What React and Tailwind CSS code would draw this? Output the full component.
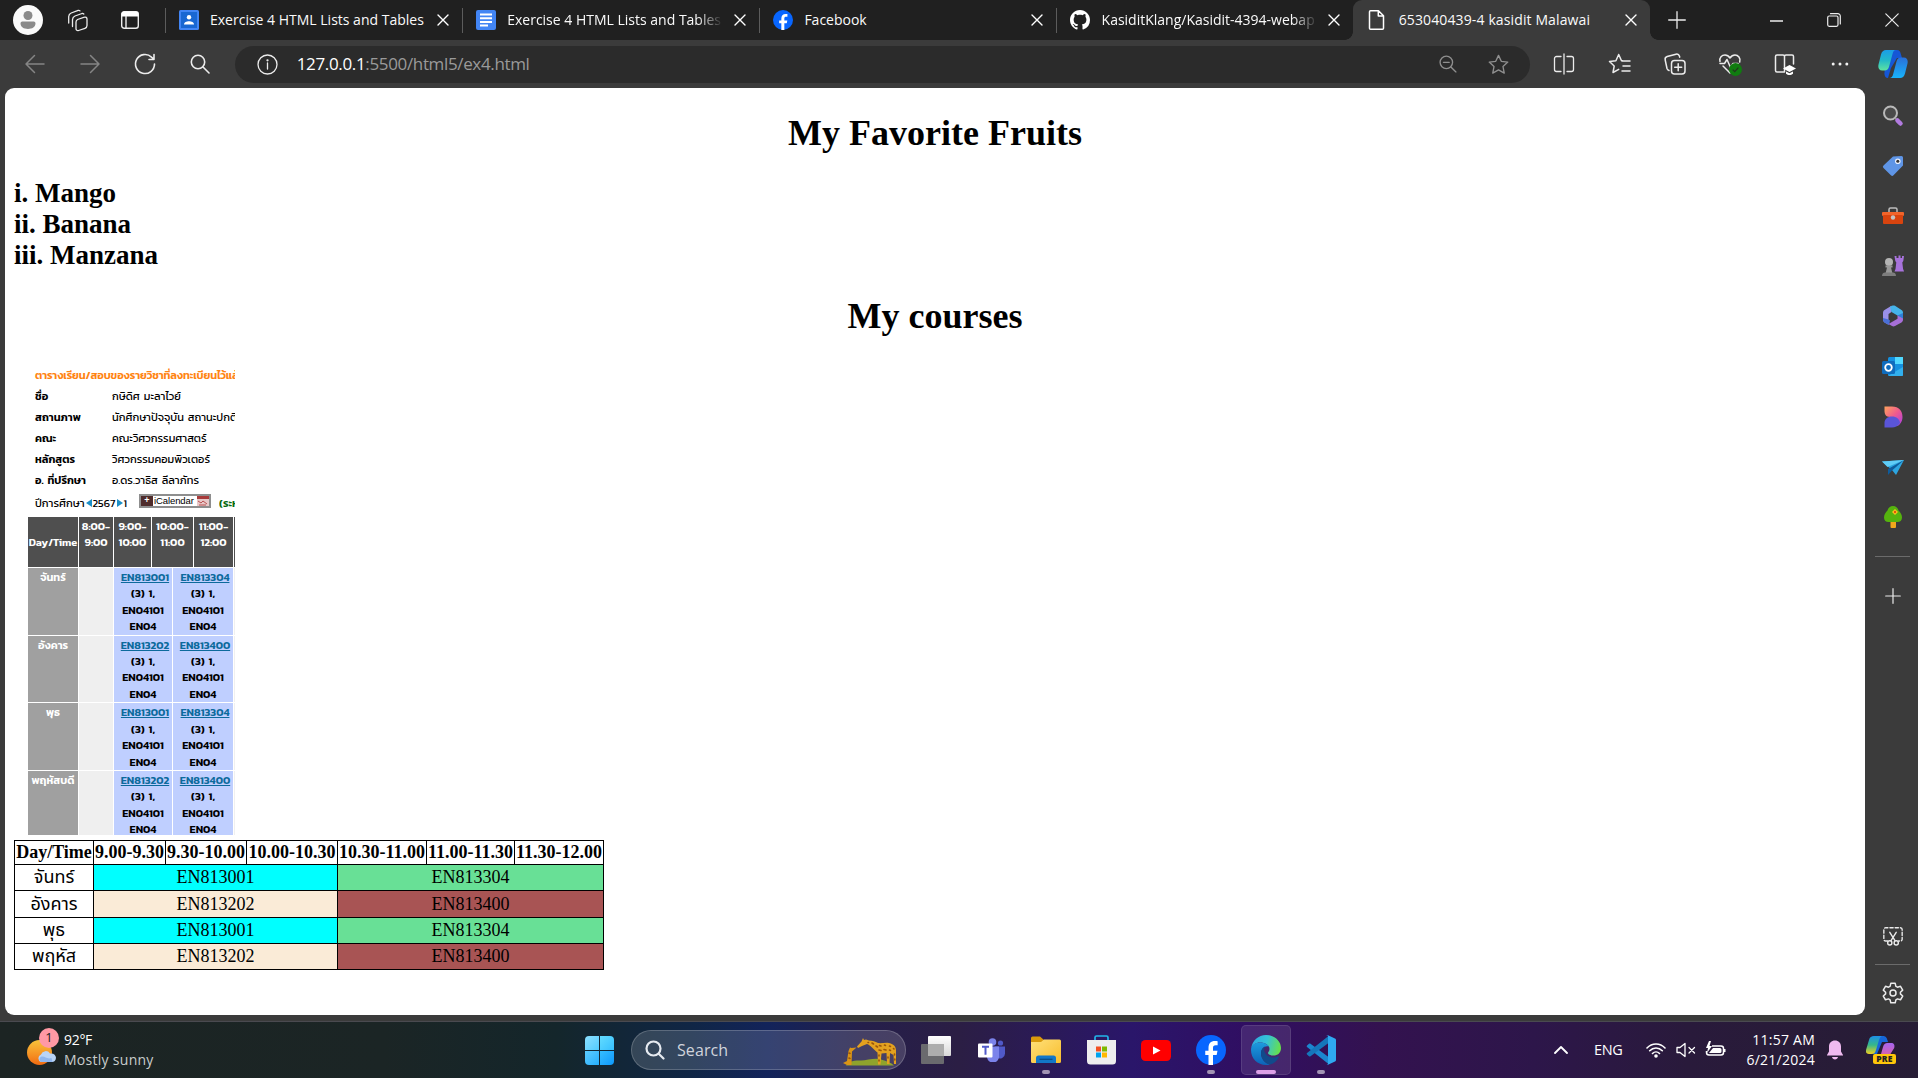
import React from "react";

const ui = "font-['Segoe_UI','Open_Sans',sans-serif]";

function Line({ size = 24, w = 1.3, color = "#ececec", children, box = "0 0 24 24" }) {
  return (
    <svg width={size} height={size} viewBox={box} fill="none" stroke={color} strokeWidth={w} strokeLinecap="round" strokeLinejoin="round" className="shrink-0">
      {children}
    </svg>
  );
}

/* ---------- favicons ---------- */

const Classroom = () => (
  <svg width="20" height="20" viewBox="0 0 20 20">
    <rect width="20" height="20" rx="1.5" fill="#4285f4" />
    <rect x="2" y="2" width="16" height="16" fill="#1967d2" />
    <circle cx="10" cy="7.3" r="2.2" fill="#fff" />
    <path d="M5 14.5c0-2.3 2.5-3.3 5-3.3s5 1 5 3.3z" fill="#fff" />
  </svg>
);

const Docs = () => (
  <svg width="20" height="20" viewBox="0 0 20 20">
    <rect width="20" height="20" rx="2" fill="#4285f4" />
    <path d="M4 3.5h12v2H4zM4 7.3h12v2H4zM4 11h12v2H4zM4 14.6h8v2H4z" fill="#fff" />
  </svg>
);

const Facebook = ({ size = 20 }) => (
  <svg width={size} height={size} viewBox="0 0 24 24">
    <circle cx="12" cy="12" r="12" fill="#0866ff" />
    <path d="M10 24v-8H7.4v-3.5H10v-2C10 6.600 11.700 4.700 15.300 4.700c.7 0 1.500.1 2 .2v3.200h-1.500c-1.700 0-2.200.8-2.200 2.200v2.200h3.600l-.7 3.500h-2.900V24z" fill="#fff" />
  </svg>
);

const Github = () => (
  <svg width="20" height="20" viewBox="0 0 16 16" fill="#fff">
    <path d="M8 0C3.580 0 0 3.580 0 8c0 3.540 2.290 6.530 5.470 7.590.4.07.55-.17.55-.38 0-.19-.01-.82-.01-1.490-2.010.37-2.530-.49-2.690-.94-.09-.23-.48-.94-.82-1.130-.28-.15-.68-.52-.01-.53.63-.01 1.080.58 1.230.82.72 1.210 1.870.87 2.330.66.07-.52.28-.87.51-1.070-1.780-.2-3.640-.89-3.640-3.950 0-.87.31-1.590.82-2.150-.08-.2-.36-1.020.08-2.120 0 0 .67-.21 2.200.82.64-.18 1.320-.27 2-.27s1.360.09 2 .27c1.530-1.040 2.200-.82 2.200-.82.44 1.100.16 1.920.08 2.120.51.56.82 1.270.82 2.150 0 3.070-1.870 3.750-3.650 3.950.29.25.54.73.54 1.480 0 1.070-.01 1.930-.01 2.200 0 .21.15.46.55.38A8 8 0 0 0 16 8c0-4.420-3.580-8-8-8z" />
  </svg>
);

const PageIcon = () => (
  <Line size={20} box="0 0 20 20" w={1.5} color="#fff">
    <path d="M3.500 .8h8l5 5v12.400a1 1 0 0 1-1 1h-12a1 1 0 0 1-1-1v-16.400a1 1 0 0 1 1-1zM11.300 1v5h5" />
  </Line>
);

const Close = () => (
  <Line size={12} box="0 0 12 12" w={1.4} color="#fff">
    <path d="M1 1l10 10M11 1L1 11" />
  </Line>
);

function Tab({ icon, title, active, fade, tracking }) {
  return (
    <div className={"relative flex h-10 w-[297.200px] shrink-0 items-center pl-[14px] " + (active ? "rounded-t-[9px] bg-[#3b3b3b]" : "")}>
      {!active && <span className="absolute left-0 top-2 h-[25px] w-px bg-[#5c5c5c]" />}
      <span className="w-5 shrink-0">{icon}</span>
      <span className={"ml-[11.500px] w-[216px] overflow-hidden whitespace-nowrap text-[14px] leading-5 text-[#fafafa] " + tracking + (fade ? " [mask-image:linear-gradient(to_right,#000_88%,transparent)]" : "")}>{title}</span>
      <span className="ml-[10.500px]"><Close /></span>
      {active && <span className="absolute -left-2 bottom-0 size-2 bg-[radial-gradient(circle_at_0_0,#202020_7.500px,#3b3b3b_8px)]" />}
      {active && <span className="absolute -right-2 bottom-0 size-2 bg-[radial-gradient(circle_at_100%_0,#202020_7.500px,#3b3b3b_8px)]" />}
    </div>
  );
}

function TabStrip() {
  return (
    <div className="flex h-10 bg-[#202020]">
      <div className="flex w-[164.500px] shrink-0 items-center pl-[13px]">
        <span className="flex size-[30px] items-center justify-center rounded-full bg-[#fafafa]">
          <svg width="18" height="20" viewBox="0 0 18 20" fill="#8a8a8a">
            <circle cx="9" cy="5.500" r="4.500" />
            <path d="M1.500 13.300a1.800 1.800 0 0 1 1.800-1.800h11.400a1.800 1.800 0 0 1 1.800 1.800c0 3.800-3.300 5.700-7.500 5.700s-7.500-1.900-7.500-5.700z" />
          </svg>
        </span>
        <span className="ml-[23px]">
          <Line size={24} w={1.3}>
            <path d="M11.500 11.500l7-2.300a1.800 1.800 0 0 1 2.500 1.700v6.600a3 3 0 0 1-2 2.800l-6.500 2.200a1.800 1.800 0 0 1-2.500-1.700v-6.500a3 3 0 0 1 1.500-2.800z" />
            <path d="M6.500 18.500v-7a4 4 0 0 1 2.500-3.500l7-2.500a2 2 0 0 1 1.800.5M2.700 15V8.500A4 4 0 0 1 5.200 5l7-2.600a2 2 0 0 1 1.800.5" />
          </Line>
        </span>
        <span className="ml-[28px]">
          <svg width="24" height="24" viewBox="0 0 24 24" fill="none">
            <rect x="3.700" y="3.700" width="16.600" height="16.600" rx="2.500" stroke="#ececec" strokeWidth="1.400" />
            <path d="M3.500 8.500V6A2.500 2.500 0 0 1 6 3.500h12A2.500 2.500 0 0 1 20.500 6v2.500z" fill="#fff" />
            <path d="M8 8v12" stroke="#ececec" strokeWidth="1.400" />
          </svg>
        </span>
      </div>
      <Tab icon={<Classroom />} title="Exercise 4 HTML Lists and Tables" tracking="tracking-[0px]" />
      <Tab icon={<Docs />} title="Exercise 4 HTML Lists and Tables" fade tracking="tracking-[0px]" />
      <Tab icon={<Facebook />} title="Facebook" tracking="tracking-[0px]" />
      <Tab icon={<Github />} title="KasiditKlang/Kasidit-4394-webap" fade tracking="tracking-[0px]" />
      <Tab icon={<PageIcon />} title="653040439-4 kasidit Malawai" active tracking="tracking-[0.120px]" />
      <div className="flex flex-1 items-center justify-between pl-[18px] pr-[19px]">
        <Line size={18} box="0 0 18 18"><path d="M9 .7v16.600M.7 9h16.600" /></Line>
        <div className="flex items-center gap-[44px]">
          <Line size={13} box="0 0 13 13"><path d="M0 7h13" /></Line>
          <Line size={14} box="0 0 14 14" w={1.200}><rect x=".7" y="3" width="10.300" height="10.300" rx="1.500" /><path d="M3.500 .7h7.300a2.500 2.500 0 0 1 2.500 2.500V11" /></Line>
          <Line size={14} box="0 0 14 14" w={1.200}><path d="M.8 .8l12.400 12.400M13.200 .8L.8 13.200" /></Line>
        </div>
      </div>
    </div>
  );
}

const Copilot = () => (
  <svg width="30" height="28" viewBox="0 0 30 28">
    <defs>
      <linearGradient id="cpA" x1="0" y1="0" x2="0" y2="1"><stop offset="0" stopColor="#1b9de8" /><stop offset=".5" stopColor="#22b8c9" /><stop offset="1" stopColor="#5fe3a0" /></linearGradient>
      <linearGradient id="cpB" x1="0" y1="0" x2="0" y2="1"><stop offset="0" stopColor="#2a6fd8" /><stop offset="1" stopColor="#18b4fb" /></linearGradient>
    </defs>
    <path d="M8 0h11c2.500 0 3 1.500 3.700 3.500L24 8h-5l-6 10-3 10c-2.500 0-3-1.500-3.600-4z" fill="#1557d6" />
    <path d="M8 0h10c-2 0-2.800 1.200-3.500 4l-3.400 12.500c-.7 2.500-2 4-4.500 4H4.200C1 20.500-.2 18 .5 14.500L3 4.500C3.800 1.500 5.500 0 8 0z" fill="url(#cpA)" />
    <path d="M22 28H11.500c2 0 3-1.200 3.700-4l3.300-12.500c.7-2.500 2-4 4.500-4h2.800c3.200 0 4.400 2.500 3.700 6L27 23.500c-.8 3-2.500 4.500-5 4.500z" fill="url(#cpB)" />
  </svg>
);

function Toolbar() {
  const cell = "flex w-[55.200px] shrink-0 justify-center";
  return (
    <div className="flex h-12 items-center bg-[#3b3b3b] pl-[7px]">
      <span className={cell}><Line color="#858585" w={1.500}><path d="M21 12H3.500M11.500 3.500L3 12l8.500 8.500" /></Line></span>
      <span className={cell}><Line color="#858585" w={1.500}><path d="M3 12h17.500M12.500 3.500L21 12l-8.500 8.500" /></Line></span>
      <span className={cell}><Line w={1.600}><path d="M21.500 12a9.500 9.500 0 1 1-3-6.900L21 7.300M21 2.500v5h-5" /></Line></span>
      <span className={cell}><Line w={1.600}><circle cx="10" cy="10" r="6.700" /><path d="M15 15l6 6" /></Line></span>
      <div className="ml-[7px] flex h-[37px] w-[1295px] shrink-0 items-center rounded-full bg-[#2b2b2b] pl-[22px] pr-[20px]">
        <Line size={21} box="0 0 21 21" w={1.300}><circle cx="10.500" cy="10.500" r="9.500" /><path d="M10.500 9v6" /><circle cx="10.500" cy="6.300" r=".5" fill="#ececec" /></Line>
        <span className="ml-[19px] text-[17px] leading-6 tracking-[-0.350px] text-[#9a9a9a]"><span className="text-white">127.0.0.1</span>:5500/html5/ex4.html</span>
        <span className="flex-1" />
        <Line color="#8f8f8f" size={20} w={1.600}><circle cx="10" cy="10" r="7.500" /><path d="M15.500 15.500l6 6M6.500 10h7" /></Line>
        <span className="ml-[29px] flex"><Line color="#8f8f8f" size={23} w={1.400}><path d="M12 2.500l2.900 6.200 6.800.8-5 4.700 1.300 6.800-6-3.400L6 21l1.300-6.800-5-4.700 6.800-.8z" /></Line></span>
      </div>
      <span className={cell + " ml-[7px]"}><Line><path d="M12 2v20M9 4.500H4.500a2 2 0 0 0-2 2v11a2 2 0 0 0 2 2H9M15 4.500h4.500a2 2 0 0 1 2 2v11a2 2 0 0 1-2 2H15" /></Line></span>
      <span className={cell}><Line w={1.500}><path d="M14.500 8.700h-1L10.700 2.500 7.900 8.700l-6.400.8 4.700 4.500L5 20.500l5.700-3.200M14 9h8M15 14h7M14 19h8" /></Line></span>
      <span className={cell}><Line w={1.500}><rect x="8.500" y="8.500" width="13.500" height="13.500" rx="3" /><path d="M15.200 11.700v7M11.700 15.200h7M6 18.500a3 3 0 0 1-2-2L2.200 8a3 3 0 0 1 2-3.500L13 2.200a3 3 0 0 1 3.500 2l.2 1" /></Line></span>
      <span className={cell + " relative"}><Line size={24} w={1.500}><path d="M2 9.500C1 5.500 4 3 7 3c2.500 0 4 1.500 5 3 1-1.500 2.500-3 5-3 3 0 6 3 4.700 7M5 14l7 7 2-2M2 11.500h4.500l2.500-4 3.500 8 2.500-4H20" /></Line>
        <span className="absolute left-[27px] top-[11px]"><svg width="13" height="13" viewBox="0 0 13 13"><circle cx="6.500" cy="6.500" r="6.500" fill="#107c10" /><path d="M3.700 6.700l2 2 3.700-4" stroke="#24351f" strokeWidth="1.200" fill="none" /></svg></span>
      </span>
      <span className={cell}><Line w={1.500}><path d="M11 20H4a1.500 1.500 0 0 1-1.500-1.500v-14A1.500 1.500 0 0 1 4 3h6a1.500 1.500 0 0 1 1.500 1.500V20M11.500 4.500A1.500 1.500 0 0 1 13 3h6a1.500 1.500 0 0 1 1.500 1.500V12" /><path d="M10 16.500l6.500-3.500 6.500 3.500-6.500 3.500z" fill="#fff" stroke="none" /><path d="M13 19.500l3.500 1.700 3.500-1.700v2.200c-2 1.800-5 1.800-7 0z" fill="#fff" stroke="none" /></Line></span>
      <span className={cell}><svg width="18" height="4" viewBox="0 0 18 4" fill="#f2f2f2"><circle cx="2.200" cy="2" r="1.500" /><circle cx="9" cy="2" r="1.500" /><circle cx="15.800" cy="2" r="1.500" /></svg></span>
      <span className="ml-[10px]"><Copilot /></span>
    </div>
  );
}

/* ---------- web page ---------- */

const thin = "font-['Kanit','Noto_Sans_Thai','Noto_Sans',sans-serif]";

const info = [
  ["ชื่อ", "กษิดิศ มะลาไวย์"],
  ["สถานภาพ", "นักศึกษาปัจจุบัน สถานะปกติ"],
  ["คณะ", "คณะวิศวกรรมศาสตร์"],
  ["หลักสูตร", "วิศวกรรมคอมพิวเตอร์"],
  ["อ. ที่ปรึกษา", "อ.ดร.วาธิส ลีลาภัทร"],
];

const weekdays = [
  ["จันทร์", "EN813001", "EN813304"],
  ["อังคาร", "EN813202", "EN813400"],
  ["พุธ", "EN813001", "EN813304"],
  ["พฤหัสบดี", "EN813202", "EN813400"],
];

function Course({ code }) {
  return (
    <div className="bg-[#bfcfff] pt-[1px] text-center leading-[16.400px]">
      <div className="pl-[4px] text-[#0c6a9c] underline">{code}</div>
      <div>(3) 1,</div>
      <div>EN04101</div>
      <div>EN04</div>
    </div>
  );
}

function Registration() {
  return (
    <div className={"h-[470px] w-[207px] overflow-hidden whitespace-nowrap text-[11px] text-black [word-spacing:1.500px] " + thin}>
      <div className="h-[21px] pl-[7px] text-[11px] font-semibold leading-[20px] tracking-[-0.120px] text-[#ff8412]">ตารางเรียน/สอบของรายวิชาที่ลงทะเบียนไว้แล้</div>
      {info.map(([k, v]) => (
        <div key={k} className="flex h-[21.100px] pl-[7px] leading-[20px]">
          <span className="w-[77px] shrink-0 font-semibold">{k}</span>
          <span>{v}</span>
        </div>
      ))}
      <div className="flex h-[24.500px] items-center pb-[1px] pl-[7px]">
        <span className="w-[50.500px] shrink-0">ปีการศึกษา</span>
        <svg width="6" height="8" viewBox="0 0 6 8" fill="#1c8fc6" className="shrink-0"><path d="M6 0v8L0 4z" /></svg>
        <span className="w-[25px] shrink-0 text-center">2567</span>
        <svg width="6" height="8" viewBox="0 0 6 8" fill="#1c8fc6" className="shrink-0"><path d="M0 0v8l6-4z" /></svg>
        <span className="w-[16.500px] shrink-0 pl-px">1</span>
        <span className="mb-[5px] flex h-[14px] w-[72px] shrink-0 items-center border-2 border-[#8e8e8e] bg-white font-['Liberation_Sans'] text-[9.500px]">
          <span className="flex h-full w-[12px] items-center justify-center bg-[#4e2b2b] text-[9px] font-bold text-white">+</span>
          <span className="flex-1 pl-px tracking-[-0.100px]">iCalendar</span>
          <svg width="12" height="10" viewBox="0 0 12 10" className="shrink-0"><rect width="12" height="10" fill="#e8c8c8" /><rect width="12" height="3" fill="#a83a3a" /><path d="M1 5l3 2 2-2 4 3M2 9h7" stroke="#b85050" fill="none" /></svg>
        </span>
        <span className="ml-[8px] w-[16px] shrink-0 overflow-hidden font-semibold text-[#0b6b12]">(ระห</span>
      </div>
      <div className="mt-[1px] flex h-[50px] gap-px font-semibold leading-[16px] text-white">
        <div className="flex w-[50px] shrink-0 items-center justify-center bg-[#4f4f4f] text-[10.800px]">Day/Time</div>
        <div className="w-[34px] shrink-0 bg-[#4f4f4f] pt-px text-center">8:00-<br />9:00</div>
        <div className="w-[37px] shrink-0 bg-[#4f4f4f] pt-px text-center">9:00-<br />10:00</div>
        <div className="w-[41px] shrink-0 bg-[#4f4f4f] pt-px text-center">10:00-<br />11:00</div>
        <div className="w-[39px] shrink-0 bg-[#4f4f4f] pt-px text-center">11:00-<br />12:00</div>
        <div className="w-[40px] shrink-0 bg-[#4f4f4f]" />
      </div>
      {weekdays.map(([d, a, b], i) => (
        <div key={i} className="mt-px grid h-[66.700px] grid-cols-[50px_34px_58px_60px_2px] gap-px font-semibold">
          <div className="bg-[#a0a0a0] pt-px text-center leading-[17px] text-white">{d}</div>
          <div className="bg-[#efefef]" />
          <Course code={a} />
          <Course code={b} />
          <div className="bg-[#f0f0f0]" />
        </div>
      ))}
    </div>
  );
}

const slots = ["9.00-9.30", "9.30-10.00", "10.00-10.30", "10.30-11.00", "11.00-11.30", "11.30-12.00"];
const rows = [
  ["จันทร์", "EN813001", "EN813304", "h-[26px]"],
  ["อังคาร", "EN813202", "EN813400", "h-[27px]"],
  ["พุธ", "EN813001", "EN813304", "h-[26px]"],
  ["พฤหัส", "EN813202", "EN813400", "h-[26px]"],
];

function Timetable() {
  const cell = "border border-black p-0 ";
  return (
    <table className="w-[590px] table-fixed border-collapse text-center text-[18px] leading-[20px]">
      <colgroup>
        <col className="w-[79px]" /><col className="w-[72px]" /><col className="w-[81px]" /><col className="w-[91px]" /><col className="w-[89px]" /><col className="w-[88px]" /><col className="w-[89px]" />
      </colgroup>
      <tbody>
        <tr className="h-6 whitespace-nowrap">
          <th className={cell + "pb-[2px]"}>Day/Time</th>
          {slots.map((s) => <th key={s} className={cell + "pb-[2px]"}>{s}</th>)}
        </tr>
        {rows.map(([d, a, b, h], i) => (
          <tr key={i} className={h}>
            <td className={cell + "pb-[1px] font-['Liberation_Serif','Noto_Sans_Thai',sans-serif]"}>{d}</td>
            <td colSpan={3} className={cell + "pb-[1px] " + (i % 2 ? "bg-[#faebd7]" : "bg-[#00ffff]")}>{a}</td>
            <td colSpan={3} className={cell + "pb-[1px] " + (i % 2 ? "bg-[#a85454]" : "bg-[#68e096]")}>{b}</td>
          </tr>
        ))}
      </tbody>
    </table>
  );
}

function Page() {
  return (
    <main className="h-[927px] w-[1860px] shrink-0 overflow-hidden rounded-[9px] bg-white px-[9px] font-['Liberation_Serif',serif] text-black">
      <h1 className="mt-[25px] text-center text-[36px] font-bold leading-[40px]">My Favorite Fruits</h1>
      <ol className="mt-[25px] h-[93px] text-[27px] font-bold leading-[31px]">
        <li>i. Mango</li>
        <li>ii. Banana</li>
        <li>iii. Manzana</li>
      </ol>
      <h1 className="mt-[25px] text-center text-[36px] font-bold leading-[40px]">My courses</h1>
      <div className="ml-[14px] mt-[29px]"><Registration /></div>
      <div className="mt-[5px]"><Timetable /></div>
    </main>
  );
}

/* ---------- sidebar ---------- */

const sideIcons = [
  <svg width="22" height="22" viewBox="0 0 22 22"><circle cx="8.500" cy="8" r="6.500" fill="#4a4a4a" stroke="#b9b9b9" strokeWidth="2" /><path d="M13 13l2.500 2.500" stroke="#999" strokeWidth="1.600" /><path d="M15.500 15.500l3 3" stroke="#b27be0" strokeWidth="4.500" strokeLinecap="round" /></svg>,
  <svg width="22" height="22" viewBox="0 0 22 22"><path d="M11 1.500l8.500-.5A1.500 1.500 0 0 1 21 2.500v8l-9.500 9.800a1.800 1.800 0 0 1-2.600 0L1.500 13a1.800 1.800 0 0 1 0-2.600z" fill="#5f95e6" /><circle cx="15.800" cy="6.300" r="2.800" fill="#e8eefc" /><circle cx="15.800" cy="6.300" r="1.500" fill="#333" /></svg>,
  <svg width="22" height="22" viewBox="0 0 22 22"><path d="M7 7V4.500C7 3.500 7.500 3 8.500 3h5c1 0 1.500.5 1.500 1.500V7" stroke="#bdbdbd" strokeWidth="1.500" fill="none" /><rect y="7" width="22" height="4" rx="1" fill="#f2642a" /><rect x="1" y="10" width="20" height="9" rx="1" fill="#d8440f" /><circle cx="11" cy="12.500" r="2.200" fill="#c4c4c4" /></svg>,
  <svg width="24" height="24" viewBox="0 0 24 24"><path d="M13.500 2h2v2h2V1.500h2V4h1.500V2H23l-.7 5-1 1.500.8 6.500 1 2.500H13.500l1-2.500.8-6.500-1-1.500z" fill="#a873dc" /><circle cx="8" cy="8" r="4" fill="#b4b4b4" /><path d="M4.500 11.500h7v2H10l1.500 6H4.500l1.500-6H4.500z" fill="#999" /><path d="M1 22c0-2.500 1.500-3.500 3-3.500h8c1.500 0 3 1 3 3.500z" fill="#7d7d7d" /></svg>,
  <svg width="22" height="22" viewBox="0 0 22 22">
    <path d="M9.500 .8L2.500 5C1.500 5.700 1 6.500 1 8v6.500c0 1.500.5 2.200 1.500 2.900l4 2.300V9l3-2z" fill="#9a90e8" />
    <path d="M1 13v1.500c0 1.500.5 2.200 1.500 2.900L7 20l1-4.500-1.500-1z" fill="#4a6fd6" />
    <path d="M8 1.700l2-.9c1-.5 2-.5 3 0L19.500 5C20.500 5.700 21 6.500 21 8v5.500l-5.500-3L9.500 7z" fill="#45b4ea" />
    <path d="M21 9v5.500c0 1.500-.5 2.200-1.500 2.900L13 21c-1 .6-2 .6-3 0l-3.500-2 9-5.300v-3.200z" fill="#a76fd8" />
    <path d="M15.500 10.500L21 13.500V8z" fill="#2f7fd6" />
  </svg>,
  <svg width="22" height="22" viewBox="0 0 22 22"><rect x="6" y="1" width="15" height="19" rx="1.500" fill="#1490df" /><path d="M13 1h8v7h-8z" fill="#50d9ff" /><path d="M6 20l15-9v8a1 1 0 0 1-1 1z" fill="#32b0ee" /><rect y="5" width="13" height="13" rx="1.500" fill="#0f6cbd" /><circle cx="6.500" cy="11.500" r="3.300" fill="none" stroke="#fff" strokeWidth="1.800" /></svg>,
  <svg width="22" height="22" viewBox="0 0 22 22"><defs><linearGradient id="dzA" x1="0" y1="0" x2="1" y2="1"><stop stopColor="#ffa35c" /><stop offset=".5" stopColor="#f05a8e" /><stop offset="1" stopColor="#a63de8" /></linearGradient></defs><path d="M2.500 .5H10c7 0 10.500 4.500 10.500 10.500 0 5-3 8-5 9L8 11c-4 0-5.500-3-5.500-6z" fill="url(#dzA)" /><path d="M2.500 21.500V17c0-4 3-6.500 7.500-6.500S17.500 13 18 17c-2 3-5 4.500-8 4.500z" fill="#5a55d8" /></svg>,
  <svg width="22" height="22" viewBox="0 0 22 22"><path d="M0 5.500L22 4l-8 15-4-5z" fill="#2da5e0" /><path d="M22 4L6 13v6l4-4.500z" fill="#0e5c9c" /><path d="M0 5.500L22 4 5.500 11z" fill="#5fcdf7" /></svg>,
  <svg width="22" height="22" viewBox="0 0 22 22"><rect x="8.500" y="14" width="5.500" height="8" rx="1" fill="#f0a81c" /><path d="M11 0c3 0 5 2 5.500 4.500 2 1.500 3.500 4.500 3.500 7 0 3-2 4.500-4.500 4.500h-9C4 16 2 14.500 2 11.500c0-2.500 1.500-5.500 3.500-7C6 2 8 0 11 0z" fill="#55b30e" /><path d="M13 3l1.500 1.500L16 6l-1.500 1.500L13 9l-1.500-1.500L10 6l1.500-1.500z" fill="#ffc21c" /><circle cx="13" cy="6" r="1.200" fill="#e0560c" /></svg>,
];

function Sidebar() {
  return (
    <aside className="flex w-[53px] shrink-0 flex-col items-center pl-[2px]">
      <div className="mt-[3px] flex flex-col">
        {sideIcons.map((icon, i) => (
          <span key={i} className="flex h-[50.100px] items-center justify-center">{icon}</span>
        ))}
      </div>
      <span className="mt-[14px] h-px w-[35px] bg-[#6b6b6b]" />
      <span className="mt-[31px]"><Line size={16} box="0 0 16 16" w={1.200}><path d="M8 .7v14.600M.7 8h14.600" /></Line></span>
      <span className="flex-1" />
      <Line size={22} w={1.500}><path d="M6 17.500H4a2 2 0 0 1-2-2V5a2 2 0 0 1 2-2h16a2 2 0 0 1 2 2v10.500a2 2 0 0 1-2 2h-2" strokeDasharray="3.500 2.200" /><path d="M8.500 8l5.700 9M15.500 8l-5.700 9" /><circle cx="8.500" cy="19.500" r="2.300" /><circle cx="15.500" cy="19.500" r="2.300" /></Line>
      <span className="mt-[17px] h-px w-[35px] bg-[#6b6b6b]" />
      <span className="mb-[10px] mt-[16px] h-[30px]">
        <Line size={24} w={1.500}><circle cx="12" cy="12" r="3" /><path d="M9.800 2.300h4.400l.7 3 1.600.9 3-.9 2.200 3.800-2.300 2.100v1.700l2.300 2.100-2.200 3.800-3-.9-1.600.9-.7 3H9.800l-.7-3-1.600-.9-3 .9L2.300 15l2.300-2.100v-1.700L2.300 9.100l2.200-3.800 3 .9 1.600-.9z" /></Line>
      </span>
    </aside>
  );
}

/* ---------- taskbar ---------- */

const Giraffes = () => (
  <svg width="54" height="28" viewBox="0 0 54 28">
    <path d="M3 27.500c3-5 9-5 15-5s14-3 20-1 10 3 13 6z" fill="#8fa32c" />
    <path d="M0 25l4-2 1.500-10L7 9.500l1.500.5 5-.5-4.500 4L8.500 27H4z" fill="#d99416" />
    <path d="M14 8.500l4.500-5L20 0l1 2 2-.5L26 2.500c4 0 6 1 9 2.500 3 .5 7-.5 11 0 5 1 7.500 4 7 9v12h-2l-.5-9-3.500-2-.5 11h-2.500l-.5-11-5 .5-1 11H35l-.5-12C31 12 27.500 7 24 6l-5 2-4 2z" fill="#e3a11f" />
    <path d="M25 4.500h.5M29 5l1.500 1M33 8l1.500 1M36.500 7.500l1.500.5M36 12l2 .5M41.500 7l1 .5M41 11.500l2 .5M46.500 8l1 .5M46.500 12l1 .5M50.500 10.500l.5.500M36 17v1M36 22v1M45 19v1M51.500 16v1M51.800 21v1M6 15l1 .5M6 20l1 .5" stroke="#9a560c" strokeWidth="1.600" strokeLinecap="round" />
  </svg>
);

const Teams = () => (
  <svg width="27" height="24" viewBox="0 0 27 24">
    <circle cx="14.500" cy="4" r="3.800" fill="#7b83eb" /><circle cx="22.500" cy="5" r="2.600" fill="#5059c9" />
    <path d="M17 8.500h10v7a5 5 0 0 1-8 4z" fill="#5059c9" /><path d="M9 8.500h12v9a6 6 0 0 1-12 2z" fill="#7b83eb" />
    <rect y="5.500" width="14.500" height="14" rx="1" fill="#fff" /><path d="M4 8.800h7M7.500 8.800v8" stroke="#5059c9" strokeWidth="2" />
  </svg>
);

const Explorer = () => (
  <svg width="30" height="28" viewBox="0 0 30 28">
    <defs><linearGradient id="fo" x1="0" y1="0" x2="1" y2="1"><stop stopColor="#ffe07a" /><stop offset="1" stopColor="#f8bd2c" /></linearGradient></defs>
    <path d="M0 2a1.500 1.500 0 0 1 1.500-1.500H9L13 4H28v5H0z" fill="#d9990b" />
    <path d="M0 6h10l3-2.500h15.500A1.500 1.500 0 0 1 30 5v20.500a1.500 1.500 0 0 1-1.500 1.500h-27A1.500 1.500 0 0 1 0 25.500z" fill="url(#fo)" />
    <path d="M5 27v-5a2.500 2.500 0 0 1 2.500-2.500h15A2.500 2.500 0 0 1 25 22v5z" fill="#1277c8" /><path d="M8.500 23.300h13" stroke="#0b4d86" strokeWidth="1.300" />
  </svg>
);

const Store = () => (
  <svg width="29" height="30" viewBox="0 0 29 30">
    <path d="M8 6V2.500A1.500 1.500 0 0 1 9.500 1h10A1.500 1.500 0 0 1 21 2.500V6" fill="none" stroke="#22b5ea" strokeWidth="1.700" />
    <path d="M0 5h29v21a3.500 3.500 0 0 1-3.500 3.500h-22A3.500 3.500 0 0 1 0 26z" fill="#eeeeee" />
    <path d="M9 11.500h5v5H9z" fill="#f25022" /><path d="M15 11.500h5v5h-5z" fill="#7fba00" /><path d="M9 17.500h5v5H9z" fill="#00a4ef" /><path d="M15 17.500h5v5h-5z" fill="#ffb900" />
  </svg>
);

const Youtube = () => (
  <svg width="30" height="21" viewBox="0 0 30 21"><rect width="30" height="21" rx="4.500" fill="#f00" /><path d="M12 6.500v8l7.500-4z" fill="#fff" /></svg>
);

const Edge = () => (
  <svg width="30" height="30" viewBox="0 0 30 30">
    <defs>
      <linearGradient id="edA" x1="0" y1=".3" x2="1" y2=".5"><stop stopColor="#2fa8e0" /><stop offset=".5" stopColor="#35c1d8" /><stop offset="1" stopColor="#66e04c" /></linearGradient>
      <linearGradient id="edB" x1="0" y1="0" x2="0" y2="1"><stop stopColor="#1d9bde" /><stop offset="1" stopColor="#0c62b8" /></linearGradient>
    </defs>
    <path d="M.3 13.500C1 5.500 7.500 0 15 0c8.500 0 15 6 15 13 0 5-3.500 7.500-7.500 7.500-3.500 0-5.500-1.200-5.500-2.500 0-1 1.500-1.500 1.500-4C18.500 10 14 7.500 9 7.500c-4.500 0-7.500 2.500-8.700 6z" fill="url(#edA)" />
    <path d="M0 15c0-4.500 3.800-7.500 9-7.500 4.500 0 7.500 1.700 9 4-4-1.500-8 2-8 7 0 6 5 10 9 11-1.300.4-2.600.5-4 .5C6.500 30 0 23.500 0 15z" fill="url(#edB)" />
    <path d="M10 18c0-3 1.500-5.500 4-6.500-1 2-1 4-.3 5.500 1.300 3.500 5 5.500 9 5.500 1.500 0 3-.5 4-1 1-.5 1.500.3 1 1C25.500 26.500 22.500 29 19 29.500c-5-1-9-5.500-9-11.500z" fill="#114a8b" />
  </svg>
);

const VSCode = () => (
  <svg width="30" height="30" viewBox="0 0 30 30">
    <path d="M1 10.500l2-1.800c.5-.4 1-.4 1.500 0L22.500 22v7L1 12c-.5-.5-.5-1 0-1.500z" fill="#1b86cf" />
    <path d="M1 19.500l2 1.800c.5.4 1 .4 1.500 0L22.500 8V1L1 18c-.5.5-.5 1 0 1.500z" fill="#1576bb" />
    <path d="M22 .2l7 3.200c.6.300 1 .8 1 1.500v20.200c0 .7-.4 1.200-1 1.500l-7 3.200c-.8.300-1.300.2-1.800-.3.900.700 1.800 0 1.800-1V1.500c0-1-1-1.700-1.800-1C20.700 0 21.200-.1 22 .2z" fill="#2fa9f2" />
  </svg>
);

function TaskButton({ children, dot, active }) {
  return (
    <span className={"relative mr-[5px] flex size-[50px] shrink-0 items-center justify-center rounded-[5px] " + (active ? "border border-white/10 bg-white/10" : "")}>
      {children}
      {dot && <span className="absolute bottom-[1px] left-[21px] h-1 w-2 rounded-full bg-[#a294b4]" />}
      {active && <span className="absolute bottom-0 left-[14px] h-1 w-5 rounded-full bg-[#dda0e8]" />}
    </span>
  );
}

function Taskbar() {
  return (
    <footer className="flex h-[57px] items-center border-t border-[#4a4a50] bg-[linear-gradient(to_right,#1c2423_0%,#1b2525_20%,#14262b_29%,#102645_36%,#12235a_40%,#251f4b_45%,#2b1e44_50%,#2a166a_59%,#300e62_65%,#33124f_72%,#2d164a_80%,#291a3b_88%,#271d35_100%)] text-white">
      <div className="flex w-[585px] shrink-0 items-center pl-[27px]">
        <span className="relative h-[38px] w-[32px]">
          <span className="absolute left-0 top-[9px] size-[25px] rounded-full bg-gradient-to-b from-[#f7c33a] to-[#f06a10]" />
          <svg className="absolute left-[10px] top-[19px]" width="19" height="12" viewBox="0 0 19 12"><path d="M4 12a4 4 0 0 1 0-7.500A5 5 0 0 1 13 3.500c3.500-.5 6 1.500 6 4.300S17 12 15 12z" fill="#b9d4f7" /><path d="M4 12a3 3 0 0 1 .5-5.500c4-.5 5 3 10 1.500l1 4z" fill="#8fb6ee" /></svg>
          <span className="absolute left-[12px] top-[-3px] flex size-5 items-center justify-center rounded-full bg-[#ff99a4] text-[13px] text-[#222]">1</span>
        </span>
        <span className="ml-[5px] text-[14px] leading-5">
          <span className="block tracking-[-0.300px]">92°F</span>
          <span className="block tracking-[0.280px] text-[#c9cccc]">Mostly sunny</span>
        </span>
      </div>
      <span className="grid size-[29px] shrink-0 grid-cols-2 gap-px">
        <span className="rounded-tl-sm bg-gradient-to-br from-[#8be0ff] to-[#4fcbff]" /><span className="rounded-tr-sm bg-gradient-to-br from-[#62dcff] to-[#35bfff]" /><span className="rounded-bl-sm bg-gradient-to-br from-[#5bccff] to-[#22aefc]" /><span className="rounded-br-sm bg-gradient-to-br from-[#35bdff] to-[#0b98fb]" />
      </span>
      <div className="ml-[17px] flex h-10 w-[275px] shrink-0 items-center rounded-full border border-white/20 bg-white/15 pl-[13px] pr-[8px]">
        <Line size={20} box="0 0 20 20" w={2.200} color="#e6eaf0"><circle cx="8.500" cy="8.500" r="7" /><path d="M13.700 13.700l4.800 4.800" /></Line>
        <span className="ml-[12px] flex-1 text-[16px] tracking-[0.100px] text-[#d0d4dc]">Search</span>
        <span className="mt-[3px]"><Giraffes /></span>
      </div>
      <span className="relative ml-[15px] mr-[15px] h-[28px] w-[30px] shrink-0">
        <span className="absolute bottom-0 left-0 h-[20px] w-[23px] rounded-[1px] bg-[#6a6a6e]" />
        <span className="absolute right-0 top-0 h-[20px] w-[23px] rounded-[1px] bg-gradient-to-b from-white to-[#d8d8d8]" />
        <span className="absolute bottom-[8px] left-[7px] h-[12px] w-4 bg-[#adadad]" />
      </span>
      <TaskButton><Teams /></TaskButton>
      <TaskButton dot><Explorer /></TaskButton>
      <TaskButton><Store /></TaskButton>
      <TaskButton><Youtube /></TaskButton>
      <TaskButton dot><Facebook size={30} /></TaskButton>
      <TaskButton active><Edge /></TaskButton>
      <TaskButton dot><VSCode /></TaskButton>
      <span className="flex-1" />
      <Line size={14} box="0 0 14 14" w={1.800} color="#fff"><path d="M1 10l6-6 6 6" /></Line>
      <span className="ml-[26px] w-[30px] text-[14.500px] tracking-[-0.300px]">ENG</span>
      <span className="ml-[22px]"><Line size={20} box="0 0 20 20" w={1.600} color="#fff"><path d="M1 8c5-5.300 13-5.300 18 0M3.700 10.700c3.600-3.700 9-3.700 12.600 0M6.500 13.500c2-2 5-2 7 0" /><circle cx="10" cy="16" r="1" fill="#fff" /></Line></span>
      <span className="ml-[10px]"><Line size={20} box="0 0 20 20" w={1.300} color="#fff"><path d="M1 7.500h3l5-4v13l-5-4H1zM13 7.500l5.500 5.500M18.500 7.500L13 13" /></Line></span>
      <span className="ml-[9px]"><svg width="21" height="20" viewBox="0 0 21 20" fill="none"><path d="M7 6h9a2.500 2.500 0 0 1 2.500 2.500v4A2.500 2.500 0 0 1 16 15H4a2.500 2.500 0 0 1-2.500-2.500V11" stroke="#fff" strokeWidth="1.500" /><path d="M19 9h1.500v3H19zM8 8h7a1.500 1.500 0 0 1 1.500 1.500v2A1.500 1.500 0 0 1 15 13H4z" fill="#fff" /><path d="M4 1L1 8h2l-1 5 5-7H4.500L6 1z" fill="#fff" /></svg></span>
      <span className="ml-[10px] w-[79px] whitespace-nowrap text-right text-[14px] leading-5 tracking-[0.250px]">
        <span className="block">11:57 AM</span>
        <span className="block">6/21/2024</span>
      </span>
      <span className="ml-[12px]"><svg width="16" height="20" viewBox="0 0 16 20" fill="#efbaf0"><path d="M8 .5c3.500 0 6 2.500 6 6v5l2 3.500v.5H0V15l2-3.500v-5c0-3.500 2.500-6 6-6zM5 17h6c-.3 1.500-1.500 2.500-3 2.500S5.300 18.500 5 17z" /></svg></span>
      <span className="relative ml-[23px] mr-[22px] h-[28px] w-[30px]">
        <svg width="29" height="26" viewBox="0 0 29 26">
          <defs>
            <linearGradient id="prA" x1="0" y1="0" x2="0" y2="1"><stop stopColor="#1d8fe8" /><stop offset=".5" stopColor="#35b88a" /><stop offset="1" stopColor="#f0d020" /></linearGradient>
            <linearGradient id="prB" x1="0" y1="0" x2="0" y2="1"><stop stopColor="#a565f0" /><stop offset="1" stopColor="#f0608c" /></linearGradient>
          </defs>
          <path d="M8 0h9c3 0 4 2 5 6h-6l-5 12H5z" fill="#1666d8" />
          <path d="M8 0h8c-2 1-2.500 2.500-3.300 5L10 14c-1 3-2 4-4.500 4H3c-3 0-3.500-2-2.700-5L3 4c.8-3 2.500-4 5-4z" fill="url(#prA)" />
          <path d="M20 25h-9c2-1 2.500-2 3.300-4.500L17 11c1-3 2-4 4.500-4H25c3 0 4 2 3.200 5z" fill="url(#prB)" />
        </svg>
        <span className="absolute bottom-0 right-0 h-[10px] w-[23px] rounded-[2px] bg-[#ffc60a] text-center text-[8.500px] font-extrabold leading-[10px] tracking-[0.300px] text-[#222]">PRE</span>
      </span>
    </footer>
  );
}

export default function App() {
  return (
    <div className={"flex h-[1078px] w-[1918px] flex-col overflow-hidden bg-[#3b3b3b] " + ui}>
      <TabStrip />
      <Toolbar />
      <div className="flex h-[933px] shrink-0 items-stretch pl-[5px]">
        <Page />
        <Sidebar />
      </div>
      <Taskbar />
    </div>
  );
}
